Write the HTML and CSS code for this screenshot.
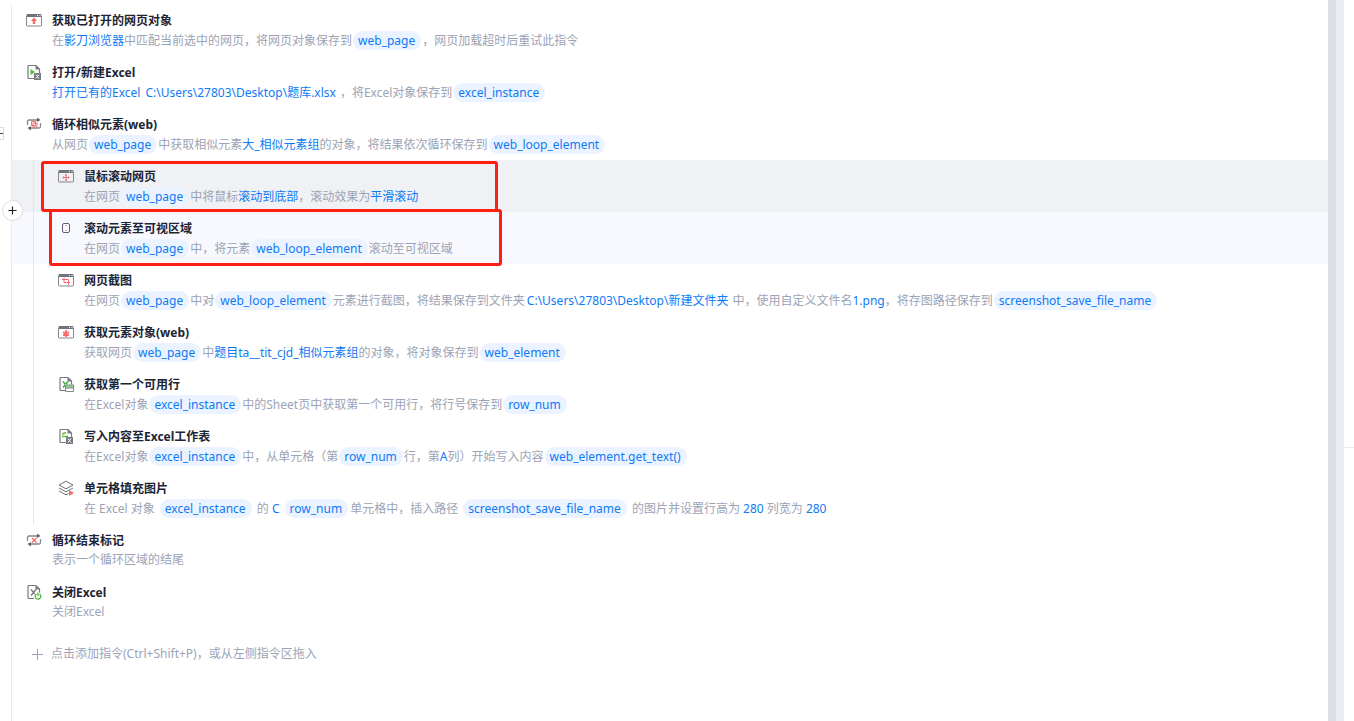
FILE: index.html
```html
<!DOCTYPE html>
<html lang="zh-CN">
<head>
<meta charset="utf-8">
<title>流程编辑</title>
<link rel="stylesheet" href="styles.css">
</head>
<body>
<svg class="defs" aria-hidden="true">
  <symbol id="win" viewBox="0 0 16 16">
    <path d="M.5 5V3q0-1 1-1h13q1 0 1 1v2z" fill="#71747d"/>
    <path d="M.5 4v9q0 1 1 1h13q1 0 1-1V4" fill="none" stroke="#85878e"/>
    <path d="M11 3.500h1M13.500 3.500h1" stroke="#fff"/>
  </symbol>
  <symbol id="loop" viewBox="0 0 16 16">
    <path d="M1.500 9V5.500q0-1.500 1.500-1.500h9M14.500 7v3.500q0 1.500-1.500 1.500H4" fill="none" stroke="#85878e" stroke-width="1.300"/>
    <path d="M11 1.500 14.500 4 11 6zM5 10v4.500L1.500 12z" fill="#5e6067"/>
  </symbol>
  <symbol id="doc" viewBox="0 0 16 16">
    <path d="M8 14.500H3q-1 0-1-1v-11q0-1 1-1h7L13.500 5v4" fill="none" stroke="#777a81" stroke-width="1.200"/>
    <path d="M9.500 1 14 5.500H9.500z" fill="#777a81"/>
  </symbol>
  <symbol id="xbadge" viewBox="0 0 16 16">
    <path d="M8 9h7v7H8z" fill="#777a81"/>
    <path d="m10 10.500 3 4m0-4-3 4" stroke="#fff"/>
  </symbol>
</svg>
<div class="editor">
  <aside class="gutter">
    <button class="edge-tab" aria-label="展开"></button>
    <button class="insert" aria-label="插入指令"><svg viewBox="0 0 10 10"><path d="M5 .5v9M.5 5h9" stroke="#222" stroke-width="1.300"/></svg></button>
  </aside>
  <main class="flow">
    <ol class="steps">
      <li class="step">
        <svg class="icon" viewBox="0 0 16 16"><use href="#win"/><path d="M8 5.500 11 9H9.200v3H6.800V9H5z" fill="#f66b6b"/></svg>
        <div class="body"><h3>获取已打开的网页对象</h3>
        <p>在<a href="#">影刀浏览器</a>中匹配当前选中的网页，将网页对象保存到<span class="chip">web_page</span>，网页加载超时后重试此指令</p></div>
      </li>
      <li class="step">
        <svg class="icon" viewBox="0 0 16 16"><use href="#doc"/><path d="m4.500 5 4.500 3-4.500 3z" fill="#55bd2c"/><use href="#xbadge"/></svg>
        <div class="body"><h3>打开/新建Excel</h3>
        <p><a href="#">打开已有的Excel</a> <a class="path" href="#">C:\Users\27803\Desktop\题库.xlsx</a>，将Excel对象保存到<span class="chip">excel_instance</span></p></div>
      </li>
      <li class="step">
        <svg class="icon" viewBox="0 0 16 16"><use href="#loop"/><path d="M5.500 5.500h4v4h-4zM7 7h4v4H7z" fill="none" stroke="#f66b6b"/></svg>
        <div class="body"><h3>循环相似元素(web)</h3>
        <p>从网页<span class="chip">web_page</span>中获取相似元素<a href="#">大_相似元素组</a>的对象，将结果依次循环保存到<span class="chip">web_loop_element</span></p></div>
      </li>
      <li class="group">
        <ol class="steps">
          <li class="step selected">
            <svg class="icon" viewBox="0 0 16 16"><use href="#win"/><path d="M8 6v7M4.500 9.500h7M7 7h2M7 12h2M5.500 8.500v2M10.500 8.500v2" stroke="#f66b6b" fill="none"/></svg>
            <div class="body"><h3>鼠标滚动网页</h3>
            <p>在网页<span class="chip">web_page</span>中将鼠标<a href="#">滚动到底部</a>，滚动效果为<a href="#">平滑滚动</a></p></div>
            <div class="mark mark-first"></div>
          </li>
          <li class="step hovered">
            <svg class="icon" viewBox="0 0 16 16"><rect x="4.500" y="3.500" width="7" height="9" rx="1.500" fill="none" stroke="#5e6067"/><path d="M7 5.500h2M7 10.500h2" stroke="#f66b6b" opacity=".6"/></svg>
            <div class="body"><h3>滚动元素至可视区域</h3>
            <p>在网页<span class="chip">web_page</span>中，将元素<span class="chip">web_loop_element</span>滚动至可视区域</p></div>
            <div class="mark mark-second"></div>
          </li>
          <li class="step">
            <svg class="icon" viewBox="0 0 16 16"><use href="#win"/><path d="M6 5.500v5h6M4 7.500h6.500V13" fill="none" stroke="#f66b6b"/></svg>
            <div class="body"><h3>网页截图</h3>
            <p>在网页<span class="chip">web_page</span>中对<span class="chip">web_loop_element</span>元素进行截图，将结果保存到文件夹<a class="path" href="#">C:\Users\27803\Desktop\新建文件夹</a>中，使用自定义文件名<a href="#">1.png</a>，将存图路径保存到<span class="chip">screenshot_save_file_name</span></p></div>
          </li>
          <li class="step">
            <svg class="icon" viewBox="0 0 16 16"><use href="#win"/><path d="M8 6v7M5 8l6 3.500M11 8l-6 3.500" stroke="#f66b6b" stroke-width="1.800"/></svg>
            <div class="body"><h3>获取元素对象(web)</h3>
            <p>获取网页<span class="chip">web_page</span>中<a href="#">题目ta__tit_cjd_相似元素组</a>的对象，将对象保存到<span class="chip">web_element</span></p></div>
          </li>
          <li class="step">
            <svg class="icon" viewBox="0 0 16 16"><use href="#doc"/><path d="m5 5.500 5 6m0-6-5 6" stroke="#45a845" stroke-width="1.500"/><path d="M7 8.500h9V16H7z" fill="#fff"/><path d="M7.500 9h8v3h-8z" fill="#94cf94"/><path d="M7.500 9h8v6.500h-8zM7.500 12h8" fill="none" stroke="#85878e"/></svg>
            <div class="body"><h3>获取第一个可用行</h3>
            <p>在Excel对象<span class="chip">excel_instance</span>中的Sheet页中获取第一个可用行，将行号保存到<span class="chip">row_num</span></p></div>
          </li>
          <li class="step">
            <svg class="icon" viewBox="0 0 16 16"><use href="#doc"/><path d="M4 6h1l1-1h2M4 8.500h6" fill="none" stroke="#55bd2c" stroke-width="1.300"/><use href="#xbadge"/></svg>
            <div class="body"><h3>写入内容至Excel工作表</h3>
            <p>在Excel对象<span class="chip">excel_instance</span>中，从单元格（第<span class="chip">row_num</span>行，第<a href="#">A</a>列）开始写入内容<span class="chip">web_element.get_text()</span></p></div>
          </li>
          <li class="step">
            <svg class="icon" viewBox="0 0 16 16"><path d="m1 5 7-3.800L15 5 8 8.800zM1 8l7 3.800L15 8M1 11l7 3.800 2.500-1.300" fill="none" stroke="#71747d"/><path d="m11 10 5 3-5 3z" fill="#f66b6b"/></svg>
            <div class="body"><h3>单元格填充图片</h3>
            <p class="spaced">在 Excel 对象 <span class="chip">excel_instance</span> 的 <a href="#">C</a> <span class="chip">row_num</span>单元格中，插入路径 <span class="chip">screenshot_save_file_name</span> 的图片并设置行高为 <a href="#">280</a> 列宽为 <a href="#">280</a></p></div>
          </li>
        </ol>
      </li>
      <li class="step">
        <svg class="icon" viewBox="0 0 16 16"><use href="#loop"/><path d="m6 6 4.500 4.500m0-4.500L6 10.500" stroke="#f66b6b" stroke-width="1.300"/></svg>
        <div class="body"><h3>循环结束标记</h3><p class="plain">表示一个循环区域的结尾</p></div>
      </li>
      <li class="step">
        <svg class="icon" viewBox="0 0 16 16"><use href="#doc"/><path d="m5 5.500 5 6m0-6-5 6" stroke="#71747d" stroke-width="1.200"/><circle cx="12" cy="12" r="3.800" fill="#fff"/><path d="M10.500 10a2.800 2.800 0 1 0 3 0M12 8.500V12" fill="none" stroke="#45b82e" stroke-width="1.200"/></svg>
        <div class="body"><h3>关闭Excel</h3><p class="plain">关闭Excel</p></div>
      </li>
    </ol>
    <button class="add"><svg viewBox="0 0 11 11"><path d="M5.500 0v11M0 5.500h11" stroke="#9ca3b5"/></svg>点击添加指令(Ctrl+Shift+P)，或从左侧指令区拖入</button>
  </main>
  <div class="scroll-track"></div>
  <div class="splitter"></div>
  <aside class="side"><div class="side-top"></div></aside>
</div>
</body>
</html>
```
FILE: styles.css
```css
* { box-sizing: border-box; }
body {
  margin: 0;
  background: #fff;
  color: #9ca3b5;
  font: 12px/18px "Noto Sans", "Noto Sans CJK SC", sans-serif;
}
.defs { position: absolute; width: 0; height: 0; }
.editor { display: flex; min-height: 100vh; }
.gutter { position: relative; flex: 0 0 11px; }
.edge-tab {
  position: absolute; left: -8px; top: 127px;
  width: 12px; height: 13px; padding: 0;
  background: linear-gradient(#444, #444) 7px 5px / 3px 1px no-repeat, #fff;
  border: 1px solid #ddd;
}
.insert {
  position: absolute; z-index: 2; left: 2px; top: 200px;
  display: grid; place-items: center;
  width: 21px; height: 21px; padding: 0;
  border: 1px solid #dcdde0; border-radius: 50%;
  background: #fff;
}
.insert svg { width: 9px; height: 9px; }
.flow { flex: 1; min-width: 0; margin-top: 4px; border-left: 1px solid #ebecef; }
.steps { margin: 0; padding: 0; list-style: none; }
.step {
  position: relative;
  display: flex; gap: 10px;
  height: 52px; padding: 8px 0 0 14px;
}
.icon { flex: none; width: 16px; height: 16px; }
.body { min-width: 0; white-space: nowrap; }
h3 { margin: 0; color: #1d2433; font-size: 12px; line-height: 18px; font-weight: 700; }
p { margin: 1px 0 0; line-height: 20px; }
.plain { line-height: 18px; }
a { color: #0f7af5; text-decoration: none; }
.path { padding: 0 4px 0 2px; }
.chip {
  display: inline-block;
  height: 19px; margin: 0 1px; padding: 0 6px 0 5px;
  border-radius: 10px;
  background: #eaf3ff; color: #0f7af5;
  font-size: 12px; line-height: 19px;
}
.spaced .chip { margin: 0 2px; }
.group { position: relative; }
.group::before {
  content: ""; position: absolute; z-index: 1;
  left: 21px; top: 0; bottom: 0; width: 1px;
  background: #e4e5e9;
}
.group .step { padding-left: 46px; }
.selected { background: #f0f1f5; }
.hovered { background: #f8f9fe; }
.mark {
  position: absolute; z-index: 3;
  border: 3px solid #fb1f14; border-radius: 3px;
  pointer-events: none;
}
.mark-first { left: 29px; top: 1px; width: 457px; height: 51px; }
.mark-second { left: 37px; top: -3px; width: 453px; height: 57px; }
.add {
  display: flex; align-items: center; gap: 8px;
  margin: 17px 0 0 20px; padding: 0;
  border: 0; background: none; color: inherit; font: inherit;
}
.add svg { width: 11px; height: 11px; }
.scroll-track { flex: 0 0 8px; background: #dddee3; }
.splitter { flex: 0 0 8px; background: #ebecf1; }
.side { flex: 0 0 10px; }
.side-top { height: calc(62vh + 1px); border-bottom: 1px solid #e8e9ed; }
```
